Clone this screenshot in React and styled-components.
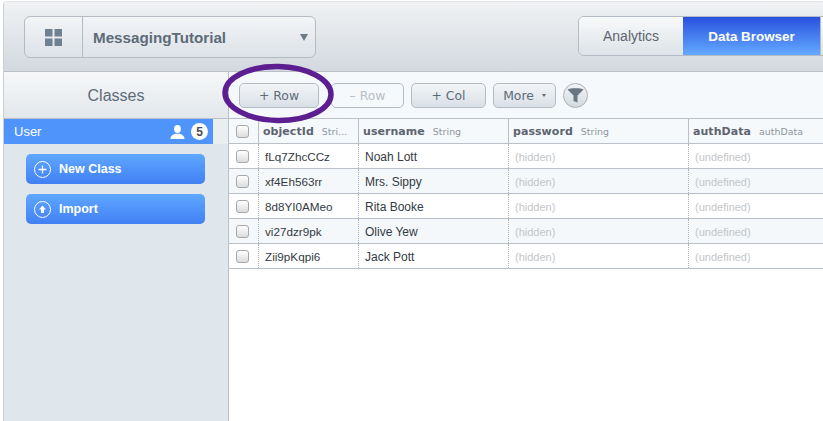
import React from "react";
import styled, {createGlobalStyle} from "styled-components";

const GlobalStyle = createGlobalStyle`
  html, body {
    margin: 0;
    padding: 0;
    background: #fff;
    overflow: hidden;
  }
`;

const Page = styled.div`
  position: relative;
  width: 823px;
  height: 421px;
  overflow: hidden;
  box-sizing: border-box;
  padding: 1px 0 0 3px;
  background: #fff;
  font-family: "Liberation Sans", Arial, sans-serif;
`;

const Frame = styled.div`
  width: 830px;
  height: 420px;
  box-sizing: border-box;
  border-left: 1px solid #c9d0d6;
  border-top: 1px solid #dfe3e7;
  border-top-left-radius: 4px;
  display: flex;
  flex-flow: column;
  overflow: hidden;
`;

const Header = styled.div`
  height: 70px;
  flex: none;
  box-sizing: border-box;
  border-bottom: 1px solid #b9bfc5;
  padding-top: 14px;
  padding-left: 20px;
  display: flex;
  align-items: flex-start;
  background: linear-gradient(#f0f2f4, #d3d9df);
`;

const AppSelect = styled.div`
  width: 292px;
  height: 42px;
  flex: none;
  box-sizing: border-box;
  border: 1px solid #b4bbc2;
  border-radius: 6px;
  display: flex;
  align-items: center;
  background: linear-gradient(#f3f5f7, #dce2e8);
`;

const GridCell = styled.div`
  width: 57px;
  height: 100%;
  flex: none;
  border-right: 1px solid #b4bbc2;
  display: flex;
  align-items: center;
  justify-content: center;
`;

const AppName = styled.div`
  flex: 1;
  padding-left: 10px;
  font-size: 15.2px;
  font-weight: bold;
  color: #5d6b78;
`;

const Caret = styled.div`
  width: 0;
  height: 0;
  margin-right: 7px;
  border-left: 4px solid transparent;
  border-right: 4px solid transparent;
  border-top: 7px solid #6d7b88;
`;

const Tabs = styled.div`
  margin-left: 262px;
  height: 40px;
  display: flex;
  flex: none;
  box-sizing: border-box;
  border: 1px solid #b4bbc2;
  border-radius: 6px 0 0 6px;
  overflow: hidden;
`;

const Tab = styled.div`
  width: ${p => p.$w}px;
  box-sizing: border-box;
  display: flex;
  align-items: center;
  justify-content: center;
  font-size: ${p => (p.$active ? 13.4 : 14)}px;
  font-weight: ${p => (p.$active ? "bold" : "normal")};
  color: ${p => (p.$active ? "#fff" : "#5d6470")};
  background: ${p => (p.$active
    ? "linear-gradient(#2951df, #64aaff)"
    : "linear-gradient(#f8f9fa, #dde3e8)")};
  &:last-child {
    border-left: 1px solid #b4bbc2;
  }
`;

const Body = styled.div`
  flex: 1;
  display: flex;
  min-height: 0;
`;

const Sidebar = styled.div`
  width: 224px;
  flex: none;
  border-right: 1px solid #b9c0c7;
  background: #e0e7ec;
`;

const ClassesTitle = styled.div`
  height: 47px;
  box-sizing: border-box;
  padding-top: 1px;
  border-bottom: 1px solid #b9c0c7;
  display: flex;
  align-items: center;
  justify-content: center;
  font-size: 16px;
  color: #5d6b78;
  background: linear-gradient(#f6f8f9, #e2e7eb);
`;

const ClassRow = styled.div`
  height: 25px;
  display: flex;
  background: linear-gradient(90deg, #fff, #e9eef1);
`;

const ClassRowFill = styled.div`
  width: 209px;
  box-sizing: border-box;
  padding: 0 5px 0 10px;
  display: flex;
  align-items: center;
  gap: 6px;
  font-size: 13px;
  color: #fff;
  background: #4f94fb;
`;

const ClassName = styled.span`
  flex: 1;
`;

const Badge = styled.span`
  width: 17px;
  height: 17px;
  border-radius: 50%;
  background: #fff;
  color: #4a4f57;
  display: flex;
  align-items: center;
  justify-content: center;
  font-size: 12px;
  font-weight: bold;
`;

const SideActions = styled.div`
  padding: 10px 23px 0 22px;
  display: flex;
  flex-flow: column;
  gap: 10px;
`;

const SideButton = styled.div`
  height: 30px;
  box-sizing: border-box;
  padding-left: 8px;
  border-radius: 5px;
  display: flex;
  align-items: center;
  gap: 8px;
  font-size: 12.5px;
  font-weight: bold;
  color: #fff;
  background: linear-gradient(#5fa7ff, #4180f4);
`;

const Main = styled.div`
  flex: 1;
  min-width: 0;
  background: #fff;
`;

const Toolbar = styled.div`
  height: 47px;
  box-sizing: border-box;
  padding: 11px 0 0 10px;
  border-bottom: 1px solid #b9c0c7;
  display: flex;
  align-items: flex-start;
  gap: 7px;
  background: #f6f9fc;
`;

const ToolButton = styled.div`
  width: ${p => p.$w}px;
  height: 25px;
  flex: none;
  margin-left: ${p => p.$gap || 0}px;
  box-sizing: border-box;
  border: 1px solid #b4bbc2;
  border-radius: 5px;
  display: flex;
  align-items: center;
  justify-content: center;
  gap: 8px;
  font-family: "DejaVu Sans", sans-serif;
  font-size: 12.4px;
  color: ${p => (p.$off ? "#b5bdc6" : "#5d6b78")};
  background: ${p => (p.$off
    ? "#f6f9fc"
    : "linear-gradient(#f3f5f7, #d9e0e6)")};
`;

const SmallCaret = styled.span`
  width: 0;
  height: 0;
  border-left: 2.5px solid transparent;
  border-right: 2.5px solid transparent;
  border-top: 3px solid #5d6b78;
`;

const FilterButton = styled.div`
  width: 25px;
  height: 25px;
  flex: none;
  box-sizing: border-box;
  border: 1px solid #a9b1b9;
  border-radius: 50%;
  display: flex;
  align-items: center;
  justify-content: center;
  background: linear-gradient(#f3f5f7, #d3dae0);
`;

const Row = styled.div`
  height: 25px;
  box-sizing: border-box;
  border-bottom: 1px solid #b9c0c7;
  display: flex;
  background: ${p => (p.$alt ? "#f4f8fa" : "#fff")};
`;

const HeadRow = styled(Row)`
  background: #f6f9fc;
`;

const Cell = styled.div`
  width: ${p => p.$w}px;
  flex: none;
  box-sizing: border-box;
  padding: 1px 0 0 6px;
  border-right: 1px dotted #a9b1b9;
  display: flex;
  align-items: center;
  font-size: ${p => (p.$muted ? 11 : 12)}px;
  color: ${p => (p.$muted ? "#c3c6c9" : "#333a44")};
  &:last-child {
    border-right: 0;
  }
`;

const IdCell = styled(Cell)`
  padding-top: 0;
  font-size: 11.7px;
`;

const CheckCell = styled(Cell)`
  padding: 0 0 0 7px;
`;

const HeadCheckCell = styled(CheckCell)`
  border-right: 1px solid #b9c0c7;
`;

const HeadCell = styled(Cell)`
  padding: 0 0 0 4px;
  gap: 8px;
  border-right: 1px solid #b9c0c7;
  white-space: nowrap;
  overflow: hidden;
  font-family: "DejaVu Sans", sans-serif;
  font-size: 11px;
  letter-spacing: 0.05px;
  font-weight: bold;
  color: #5d6470;
`;

const TypeName = styled.span`
  font-size: 9.4px;
  font-weight: normal;
  color: #8f959b;
`;

const Check = styled.span`
  width: 13px;
  height: 13px;
  box-sizing: border-box;
  border: 1px solid #a5a9ad;
  border-radius: 3px;
  background: linear-gradient(#fff, #dcdcdc);
`;

const CircleMark = styled.svg`
  position: absolute;
  left: 215px;
  top: 58px;
  pointer-events: none;
`;

const columns = [
  {key: "objectId", type: "Stri...", w: 100},
  {key: "username", type: "String", w: 150},
  {key: "password", type: "String", w: 180},
  {key: "authData", type: "authData", w: 142},
];

const users = [
  ["fLq7ZhcCCz", "Noah Lott"],
  ["xf4Eh563rr", "Mrs. Sippy"],
  ["8d8YI0AMeo", "Rita Booke"],
  ["vi27dzr9pk", "Olive Yew"],
  ["Zii9pKqpi6", "Jack Pott"],
];

const AppsIcon = () => (
  <svg width="17" height="17" viewBox="0 0 17 17" fill="#6f8090">
    <rect x="0" y="0" width="7.5" height="7.5" />
    <rect x="9.5" y="0" width="7.5" height="7.5" />
    <rect x="0" y="9.5" width="7.5" height="7.5" />
    <rect x="9.5" y="9.5" width="7.5" height="7.5" />
  </svg>
);

const PersonIcon = () => (
  <svg width="15" height="14" viewBox="0 0 15 14" fill="#fff">
    <ellipse cx="7.5" cy="4" rx="3.4" ry="4" />
    <path d="M0.5 14 C0.5 10.5 3.5 9.5 5.5 8.8 L9.5 8.8 C11.5 9.5 14.5 10.5 14.5 14 Z" />
  </svg>
);

const PlusCircle = () => (
  <svg width="17" height="17" viewBox="0 0 17 17" fill="none" stroke="#fff">
    <circle cx="8.5" cy="8.5" r="8" />
    <path d="M8.5 4.5 V12.5 M4.5 8.5 H12.5" strokeWidth="1.3" />
  </svg>
);

const UpCircle = () => (
  <svg width="17" height="17" viewBox="0 0 17 17" fill="none" stroke="#fff">
    <circle cx="8.5" cy="8.5" r="8" />
    <path d="M8.5 4.5 L12 8.5 H10 V12 H7 V8.5 H5 Z" fill="#fff" stroke="none" />
  </svg>
);

const FunnelIcon = () => (
  <svg width="17" height="15" viewBox="0 0 17 15">
    <path d="M0.5 1.5 C3 -0.2 14 -0.2 16.5 1.5 L10.5 7.5 V14.5 L6.5 13 V7.5 Z" fill="#6a7681" />
  </svg>
);

const App = () => (
  <Page>
    <GlobalStyle />
    <Frame>
      <Header>
        <AppSelect>
          <GridCell><AppsIcon /></GridCell>
          <AppName>MessagingTutorial</AppName>
          <Caret />
        </AppSelect>
        <Tabs>
          <Tab $w={104}>Analytics</Tab>
          <Tab $w={137} $active>Data Browser</Tab>
          <Tab $w={20} />
        </Tabs>
      </Header>
      <Body>
        <Sidebar>
          <ClassesTitle>Classes</ClassesTitle>
          <ClassRow>
            <ClassRowFill>
              <ClassName>User</ClassName>
              <PersonIcon />
              <Badge>5</Badge>
            </ClassRowFill>
          </ClassRow>
          <SideActions>
            <SideButton><PlusCircle />New Class</SideButton>
            <SideButton><UpCircle />Import</SideButton>
          </SideActions>
        </Sidebar>
        <Main>
          <Toolbar>
            <ToolButton $w={80}>+ Row</ToolButton>
            <ToolButton $w={73} $gap={5} $off>– Row</ToolButton>
            <ToolButton $w={75}>+ Col</ToolButton>
            <ToolButton $w={63}>More<SmallCaret /></ToolButton>
            <FilterButton><FunnelIcon /></FilterButton>
          </Toolbar>
          <HeadRow>
            <HeadCheckCell $w={30}><Check /></HeadCheckCell>
            {columns.map(c => (
              <HeadCell key={c.key} $w={c.w}>
                {c.key}
                <TypeName>{c.type}</TypeName>
              </HeadCell>
            ))}
          </HeadRow>
          {users.map(([id, name], i) => (
            <Row key={id} $alt={i % 2 === 1}>
              <CheckCell $w={30}><Check /></CheckCell>
              <IdCell $w={100}>{id}</IdCell>
              <Cell $w={150}>{name}</Cell>
              <Cell $w={180} $muted>(hidden)</Cell>
              <Cell $w={142} $muted>(undefined)</Cell>
            </Row>
          ))}
        </Main>
      </Body>
    </Frame>
    <CircleMark width="126" height="70" viewBox="0 0 126 70">
      <ellipse cx="63" cy="35.5" rx="53" ry="27" fill="none" stroke="#5c1e91" strokeWidth="5.5" transform="rotate(1 63 35.5)" />
    </CircleMark>
  </Page>
);

export default App;
